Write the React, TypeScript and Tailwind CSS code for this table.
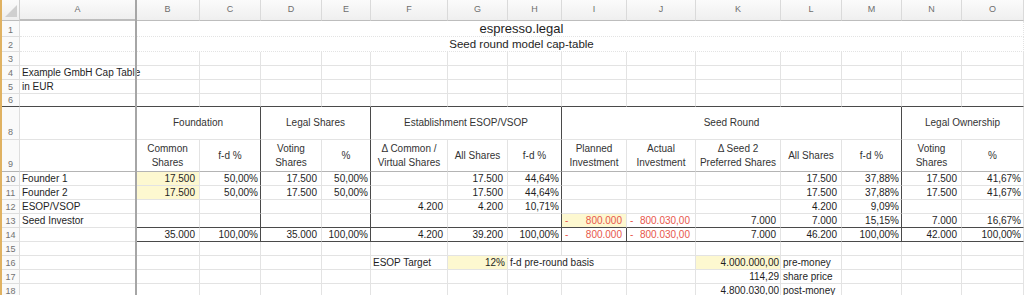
import React from 'react';

const SPAN: Record<number, string> = { 1: '', 2: 'col-span-2', 3: 'col-span-3', 5: 'col-span-5', 15: 'col-span-15' };
const DR = 'border-r-[#4a4a4a]';
const DB = 'border-b-[#4a4a4a]';
const MB = 'border-b-[#b4b4b4]';
const YEL = 'bg-[#fdf8d0]';
const INT = 'justify-end pr-[4px]';
const PCT = 'justify-end pr-[2px]';
const TXT = 'pl-[2px]';

function Cell({
  s = 1,
  c = '',
  mid = false,
  children,
}: {
  s?: number;
  c?: string;
  mid?: boolean;
  children?: React.ReactNode;
}) {
  return (
    <div
      className={`${SPAN[s]} border-r border-b border-[#e3e3e3] flex ${
        mid ? 'items-center' : 'items-end'
      } whitespace-nowrap leading-[12px] text-[10px] text-[#1e1e1e] min-w-0 ${c}`}
    >
      {children}
    </div>
  );
}

function RH({ n, c = '' }: { n?: number; c?: string }) {
  return (
    <div
      className={`border-r border-b border-[#dedede] bg-[#fafafa] flex items-end justify-center text-[9px] leading-[11px] text-[#727272] ${c}`}
    >
      {n}
    </div>
  );
}

function Acc({ v, c = '' }: { v: string; c?: string }) {
  return (
    <div className={`flex w-full justify-between text-[#e8574b] pl-[3px] ${c}`}>
      <span>-</span>
      <span>{v}</span>
    </div>
  );
}

type V = string | { v: string; acc?: boolean } | null;

const ALIGN = [TXT, INT, PCT, INT, PCT, INT, INT, PCT, '', '', INT, INT, PCT, INT, PCT];
const GROUP_R = [false, false, true, false, true, false, false, true, false, false, false, false, true, false, false];

function DataRow({
  n,
  vals,
  yellow = [],
  darkBottom = false,
  darkIR = false,
}: {
  n: number;
  vals: V[];
  yellow?: number[];
  darkBottom?: boolean;
  darkIR?: boolean;
}) {
  return (
    <>
      <RH n={n} />
      {vals.map((v, i) => {
        const cls = [
          ALIGN[i],
          GROUP_R[i] ? DR : '',
          darkBottom && i > 0 ? DB : '',
          yellow.includes(i) ? YEL : '',
          darkIR && i === 8 ? DR : '',
        ].join(' ');
        if (v && typeof v === 'object') {
          return (
            <Cell key={i} c={cls}>
              <Acc v={v.v} c={i === 9 ? 'pr-[5px]' : 'pr-[4px]'} />
            </Cell>
          );
        }
        return (
          <Cell key={i} c={cls}>
            {v}
          </Cell>
        );
      })}
    </>
  );
}

function Blank({ n, c = '' }: { n: number; c?: string }) {
  return (
    <>
      <RH n={n} />
      {Array.from({ length: 15 }).map((_, i) => (
        <Cell key={i} c={c} />
      ))}
    </>
  );
}

const LETTERS = ['A', 'B', 'C', 'D', 'E', 'F', 'G', 'H', 'I', 'J', 'K', 'L', 'M', 'N', 'O'];

export default function App() {
  return (
    <div className="w-[1024px] h-[295px] overflow-hidden bg-white" style={{ fontFamily: '"Liberation Sans", Arial, Helvetica, sans-serif' }}>
      <div className="relative border-l-2 border-[#e0b262]">
        <div className="grid grid-cols-[18px_116px_64px_61px_61px_49px_77px_60px_54px_65px_69px_85px_61px_60px_60px_62px] grid-rows-[21px_16px_15px_14px_14px_14px_13px_33px_32px_14px_14px_14px_14px_14px_14px_14px_14px_14px_14px]">
          {/* header row */}
          <div className="border-r border-b border-[#cfcfcf] border-b-[#bdbdbd] bg-gradient-to-b from-[#fbfbfb] to-[#eeeeee] flex items-end justify-end">
            <svg width="14" height="14" viewBox="0 0 14 14" className="mb-[2px] mr-[1px]">
              <polygon points="13,1 13,13 1,13" fill="#cfcfcf" />
            </svg>
          </div>
          {LETTERS.map((l, i) => (
            <div
              key={l}
              className={`border-r border-b border-[#dadada] border-b-[#bdbdbd] bg-gradient-to-b from-[#fbfbfb] to-[#efefef] flex items-center justify-center text-[9px] text-[#6e6e6e] ${
                i === 0 ? 'border-b-2 border-b-[#707070]' : ''
              }`}
            >
              {l}
            </div>
          ))}

          {/* row 1 */}
          <RH n={1} />
          <Cell s={15} c="justify-center text-[13px] leading-[15px] border-dotted border-[#dcdcdc]">
            espresso.legal
          </Cell>
          {/* row 2 */}
          <RH n={2} />
          <Cell s={15} c="justify-center text-[11.5px] leading-[14px] border-dotted border-[#dcdcdc]">
            Seed round model cap-table
          </Cell>
          {/* row 3 */}
          <Blank n={3} />
          {/* row 4 */}
          <RH n={4} />
          <Cell c={TXT}>Example GmbH Cap Table</Cell>
          {Array.from({ length: 14 }).map((_, i) => (
            <Cell key={i} />
          ))}
          {/* row 5 */}
          <RH n={5} />
          <Cell c={TXT}>in EUR</Cell>
          {Array.from({ length: 14 }).map((_, i) => (
            <Cell key={i} />
          ))}
          {/* row 6 */}
          <RH n={6} c="border-b-[#4a4a4a]" />
          {Array.from({ length: 15 }).map((_, i) => (
            <Cell key={i} c={DB} />
          ))}

          {/* row 8 */}
          <RH n={8} c="pb-[1px]" />
          <Cell />
          <Cell s={2} mid c={`${DR} justify-center text-[#333]`}>Foundation</Cell>
          <Cell s={2} mid c={`${DR} justify-center text-[#333]`}>Legal Shares</Cell>
          <Cell s={3} mid c={`${DR} justify-center text-[#333]`}>Establishment ESOP/VSOP</Cell>
          <Cell s={5} mid c={`${DR} justify-center text-[#333]`}>Seed Round</Cell>
          <Cell s={2} mid c="justify-center text-[#333]">Legal Ownership</Cell>

          {/* row 9 */}
          <RH n={9} c={`pb-[1px] ${MB}`} />
          <Cell c={MB} />
          {[
            ['Common', 'Shares'],
            ['f-d %'],
            ['Voting', 'Shares'],
            ['%'],
            ['Δ Common /', 'Virtual Shares'],
            ['All Shares'],
            ['f-d %'],
            ['Planned', 'Investment'],
            ['Actual', 'Investment'],
            ['Δ Seed 2', 'Preferred Shares'],
            ['All Shares'],
            ['f-d %'],
            ['Voting', 'Shares'],
            ['%'],
          ].map((lines, i) => (
            <Cell
              key={i}
              mid
              c={`${MB} justify-center text-center leading-[14px] text-[#333] ${GROUP_R[i + 1] ? DR : ''}`}
            >
              <div>
                {lines.map((l, j) => (
                  <div key={j}>{l}</div>
                ))}
              </div>
            </Cell>
          ))}

          {/* rows 10-14 */}
          <DataRow
            n={10}
            yellow={[1]}
            vals={['Founder 1', '17.500', '50,00%', '17.500', '50,00%', null, '17.500', '44,64%', null, null, null, '17.500', '37,88%', '17.500', '41,67%']}
          />
          <DataRow
            n={11}
            yellow={[1]}
            vals={['Founder 2', '17.500', '50,00%', '17.500', '50,00%', null, '17.500', '44,64%', null, null, null, '17.500', '37,88%', '17.500', '41,67%']}
          />
          <DataRow
            n={12}
            vals={['ESOP/VSOP', null, null, null, null, '4.200', '4.200', '10,71%', null, null, null, '4.200', '9,09%', null, null]}
          />
          <DataRow
            n={13}
            yellow={[8]}
            darkBottom
            vals={[
              'Seed Investor',
              null,
              null,
              null,
              null,
              null,
              null,
              null,
              { v: '800.000', acc: true },
              { v: '800.030,00', acc: true },
              '7.000',
              '7.000',
              '15,15%',
              '7.000',
              '16,67%',
            ]}
          />
          <DataRow
            n={14}
            darkBottom
            darkIR
            vals={[
              null,
              '35.000',
              '100,00%',
              '35.000',
              '100,00%',
              '4.200',
              '39.200',
              '100,00%',
              { v: '800.000', acc: true },
              { v: '800.030,00', acc: true },
              '7.000',
              '46.200',
              '100,00%',
              '42.000',
              '100,00%',
            ]}
          />

          {/* row 15 */}
          <Blank n={15} />

          {/* row 16 */}
          <RH n={16} />
          <Cell />
          <Cell />
          <Cell />
          <Cell />
          <Cell />
          <Cell c={TXT}>ESOP Target</Cell>
          <Cell c={`${YEL} justify-end pr-[2px]`}>12%</Cell>
          <Cell c="pl-[2px] border-r-transparent">f-d pre-round basis</Cell>
          <Cell />
          <Cell />
          <Cell c={`${YEL} justify-end pr-[1px]`}>4.000.000,00</Cell>
          <Cell c={TXT}>pre-money</Cell>
          <Cell />
          <Cell />
          <Cell />

          {/* row 17 */}
          <RH n={17} />
          {Array.from({ length: 10 }).map((_, i) => (
            <Cell key={i} />
          ))}
          <Cell c="justify-end pr-[1px]">114,29</Cell>
          <Cell c={TXT}>share price</Cell>
          <Cell />
          <Cell />
          <Cell />

          {/* row 18 */}
          <RH n={18} />
          {Array.from({ length: 10 }).map((_, i) => (
            <Cell key={i} />
          ))}
          <Cell c="justify-end pr-[1px]">4.800.030,00</Cell>
          <Cell c={TXT}>post-money</Cell>
          <Cell />
          <Cell />
          <Cell />
        </div>
        {/* frozen pane divider over column A / B */}
        <div className="absolute top-0 bottom-0 left-[133px] w-[2px] bg-[#a6a6a6]" />
      </div>
    </div>
  );
}
